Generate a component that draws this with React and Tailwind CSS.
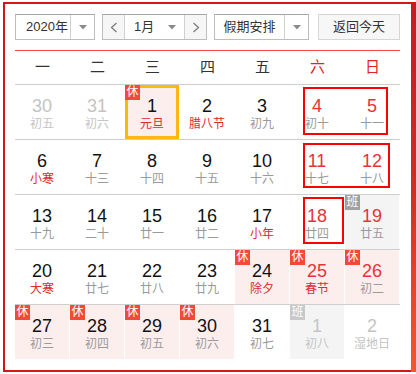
import React from "react";

const rows = [
  [
    { n: "30", l: "初五", other: true },
    { n: "31", l: "初六", other: true },
    { n: "1", l: "元旦", fest: true, hol: true, sel: true },
    { n: "2", l: "腊八节", fest: true },
    { n: "3", l: "初九" },
    { n: "4", l: "初十", wk: true },
    { n: "5", l: "十一", wk: true },
  ],
  [
    { n: "6", l: "小寒", fest: true },
    { n: "7", l: "十三" },
    { n: "8", l: "十四" },
    { n: "9", l: "十五" },
    { n: "10", l: "十六" },
    { n: "11", l: "十七", wk: true },
    { n: "12", l: "十八", wk: true },
  ],
  [
    { n: "13", l: "十九" },
    { n: "14", l: "二十" },
    { n: "15", l: "廿一" },
    { n: "16", l: "廿二" },
    { n: "17", l: "小年", fest: true },
    { n: "18", l: "廿四", wk: true },
    { n: "19", l: "廿五", wk: true, work: true },
  ],
  [
    { n: "20", l: "大寒", fest: true },
    { n: "21", l: "廿七" },
    { n: "22", l: "廿八" },
    { n: "23", l: "廿九" },
    { n: "24", l: "除夕", fest: true, hol: true },
    { n: "25", l: "春节", fest: true, hol: true, wk: true },
    { n: "26", l: "初二", hol: true, wk: true },
  ],
  [
    { n: "27", l: "初三", hol: true },
    { n: "28", l: "初四", hol: true },
    { n: "29", l: "初五", hol: true },
    { n: "30", l: "初六", hol: true },
    { n: "31", l: "初七" },
    { n: "1", l: "初八", other: true, work: true },
    { n: "2", l: "湿地日", other: true },
  ],
];

function Tri() {
  return (
    <svg width="8" height="5" viewBox="0 0 8 5">
      <polygon points="0,0 8,0 4,4.5" fill="#8a8a8a" />
    </svg>
  );
}

function Chevron({ right }) {
  return (
    <svg width="8" height="11" viewBox="0 0 8 11">
      <polyline
        points={right ? "1.5,1 6.5,5.5 1.5,10" : "6.5,1 1.5,5.5 6.5,10"}
        fill="none"
        stroke="#7a7a7a"
        strokeWidth="1.2"
      />
    </svg>
  );
}

function Cell({ d }) {
  let bg = "";
  if (d.hol) bg = "bg-[#fdeeee]";
  else if (d.work) bg = "bg-[#f4f4f4]";

  let numColor = "text-[#111]";
  if (d.other) numColor = "text-[#c4c4c4]";
  else if (d.wk) numColor = "text-[#e8323a]";

  let lunColor = "text-[#9a9a9a]";
  if (d.other) lunColor = "text-[#c4c4c4]";
  else if (d.fest) lunColor = "text-[#e02a2a]";

  return (
    <div className={"relative h-full flex flex-col items-center pt-[11px] " + bg}>
      <div className={"text-[18px] leading-[20px] " + numColor}>{d.n}</div>
      <div className={"text-[12px] leading-[16px] " + lunColor}>{d.l}</div>
      {d.sel && <div className="absolute inset-0 border-[3px] border-[#ffb80f]" />}
      {d.hol && (
        <div className="absolute left-0 top-0 w-[15px] h-[15px] bg-[#f5483b] text-white text-[12px] leading-[15px] text-center">
          休
        </div>
      )}
      {d.work && (
        <div
          className={
            "absolute left-0 top-0 w-[15px] h-[15px] text-white text-[12px] leading-[15px] text-center " +
            (d.other ? "bg-[#c8c8c8]" : "bg-[#a0a0a0]")
          }
        >
          班
        </div>
      )}
    </div>
  );
}

export default function App() {
  const weekdays = ["一", "二", "三", "四", "五", "六", "日"];
  return (
    <div className="relative w-[416px] h-[374px] bg-white overflow-hidden font-['Liberation_Sans','Noto_Sans_CJK_SC',sans-serif]">
      <div className="ml-[3px] mt-[2px] flex">
        <div className="w-[408px] border-l-2 border-t-2 border-b-2 border-[#cc1a1a] pl-[10px] pr-[11px] pt-[10px] pb-[11px]">
          {/* header */}
          <div className="flex h-[26px] text-[13px] text-[#333] whitespace-nowrap">
            <div className="flex w-[80px] border border-[#bdbdbd] border-t-[#a5a5a5]">
              <div className="flex-1 flex items-center pl-[10px]">2020年</div>
              <div className="w-[24px] border-l border-[#d0d0d0] flex items-center justify-center">
                <Tri />
              </div>
            </div>
            <div className="ml-[7px] flex w-[105px] border border-[#bdbdbd] border-t-[#a5a5a5]">
              <div className="w-[22px] border-r border-[#d0d0d0] bg-[#f6f6f6] flex items-center justify-center">
                <Chevron />
              </div>
              <div className="flex-1 flex items-center justify-between pl-[9px] pr-[8px]">
                <span>1月</span>
                <Tri />
              </div>
              <div className="w-[22px] border-l border-[#d0d0d0] bg-[#f6f6f6] flex items-center justify-center">
                <Chevron right />
              </div>
            </div>
            <div className="ml-[7px] flex w-[95px] border border-[#bdbdbd] border-t-[#a5a5a5]">
              <div className="flex-1 flex items-center justify-center">假期安排</div>
              <div className="w-[24px] border-l border-[#d0d0d0] flex items-center justify-center">
                <Tri />
              </div>
            </div>
            <div className="ml-[9px] w-[82px] border border-[#d6d6d6] bg-[#f7f7f7] flex items-center justify-center">
              返回今天
            </div>
          </div>

          <div className="mt-[10px] h-px bg-[#f04a4a]" />

          <div className="grid grid-cols-7 h-[33px] items-center text-center text-[15px]">
            {weekdays.map((w, i) => (
              <div key={w} className={i >= 5 ? "text-[#e02424]" : "text-[#333]"}>
                {w}
              </div>
            ))}
          </div>

          {rows.map((row, ri) => (
            <div key={ri} className="border-t border-[#cfcfcf] grid grid-cols-7">
              {row.map((d, ci) => (
                <div key={ci} className="h-[54px] pr-px">
                  <Cell d={d} />
                </div>
              ))}
            </div>
          ))}
        </div>
        <div className="w-[5px] bg-gradient-to-b from-[#cc1a1a] via-[#d82a1e] to-[#f5582a]" />
      </div>

      {/* highlight boxes */}
      <div className="absolute left-[303px] top-[87px] w-[85px] h-[48px] border-2 border-[#ff0000]" />
      <div className="absolute left-[303px] top-[143px] w-[87px] h-[45px] border-2 border-[#ff0000]" />
      <div className="absolute left-[303px] top-[197px] w-[41px] h-[47px] border-2 border-[#ff0000]" />
    </div>
  );
}
